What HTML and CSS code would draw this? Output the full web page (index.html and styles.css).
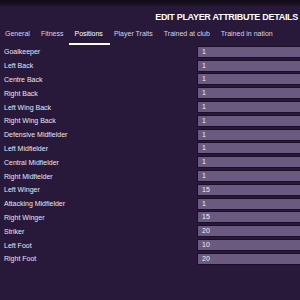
FILE: index.html
```html
<!DOCTYPE html>
<html lang="en">
  <head>
    <meta charset="UTF-8" />
    <title>Edit Player Attribute Details</title>
    <link rel="stylesheet" href="styles.css">
  </head>
  <body>
    <div class="topbar"></div>
    <div class="header">
      <h1 class="title">EDIT PLAYER ATTRIBUTE DETAILS</h1>
    </div>
    <div class="tabs">
      <span class="tab">General</span>
      <span class="tab">Fitness</span>
      <span class="tab active">Positions</span>
      <span class="tab">Player Traits</span>
      <span class="tab">Trained at club</span>
      <span class="tab">Trained in nation</span>
    </div>
    <div class="list">
      <div class="row"><span class="label">Goalkeeper</span><span class="field">1</span></div>
      <div class="row"><span class="label">Left Back</span><span class="field">1</span></div>
      <div class="row"><span class="label">Centre Back</span><span class="field">1</span></div>
      <div class="row"><span class="label">Right Back</span><span class="field">1</span></div>
      <div class="row"><span class="label">Left Wing Back</span><span class="field">1</span></div>
      <div class="row"><span class="label">Right Wing Back</span><span class="field">1</span></div>
      <div class="row"><span class="label">Defensive Midfielder</span><span class="field">1</span></div>
      <div class="row"><span class="label">Left Midfielder</span><span class="field">1</span></div>
      <div class="row"><span class="label">Central Midfielder</span><span class="field">1</span></div>
      <div class="row"><span class="label">Right Midfielder</span><span class="field">1</span></div>
      <div class="row"><span class="label">Left Winger</span><span class="field">15</span></div>
      <div class="row"><span class="label">Attacking Midfielder</span><span class="field">1</span></div>
      <div class="row"><span class="label">Right Winger</span><span class="field">15</span></div>
      <div class="row"><span class="label">Striker</span><span class="field">20</span></div>
      <div class="row"><span class="label">Left Foot</span><span class="field">10</span></div>
      <div class="row"><span class="label">Right Foot</span><span class="field">20</span></div>
    </div>
  </body>
</html>
```

FILE: styles.css
```css
html {
  margin: 0;
  padding: 0;
}
body {
  margin: 0;
  width: 300px;
  height: 300px;
  overflow: hidden;
  background-color: #28193b;
  color: #e6e0ee;
  font-family: "Liberation Sans", Arial, sans-serif;
}
/* dark strip at the very top */
.topbar {
  height: 7px;
  background: linear-gradient(#0f0a14, #1d1229 70%, #28193b);
}
.header {
  height: 20px;
  display: flex;
  justify-content: flex-end;
  align-items: center;
  padding-right: 2px;
}
.title {
  margin: 0;
  font-size: 9px;
  font-weight: bold;
  color: #ffffff;
  letter-spacing: -0.3px;
}
.tabs {
  height: 18px;
  display: flex;
  gap: 11px;
  padding-left: 5px;
  font-size: 7px;
  color: #d9d2e3;
}
.tab {
  position: relative;
  line-height: 14px;
}
.tab.active {
  color: #ffffff;
}
.tab.active::after {
  content: "";
  position: absolute;
  left: -5px;
  right: -7px;
  top: 16px;
  height: 2px;
  background-color: #ffffff;
}
.list {
  display: flex;
  flex-direction: column;
}
.row {
  height: 13.8px;
  display: flex;
  align-items: center;
  font-size: 7px;
}
.label {
  width: 193px;
  padding-left: 4px;
  color: #e9e4f0;
}
.field {
  flex: 1;
  height: 10px;
  margin-right: -10px;
  padding-left: 4px;
  line-height: 10px;
  background-color: #6a5a80;
  border: 0.5px solid #1a0f26;
  color: #f3eff7;
}
```
